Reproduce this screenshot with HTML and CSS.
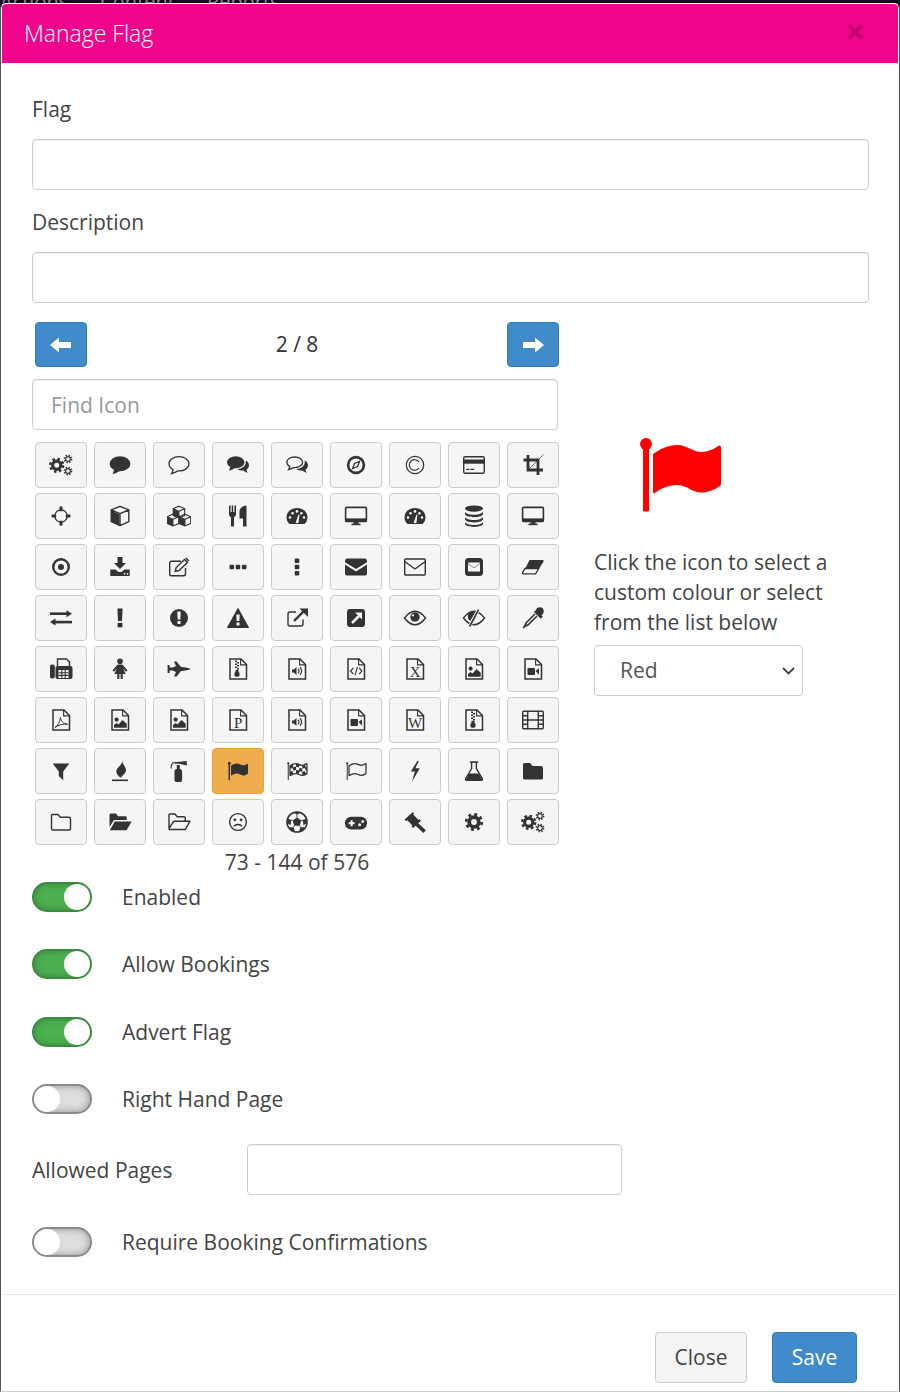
FILE: index.html
```html
<!DOCTYPE html>
<html lang="en">
<head>
<meta charset="utf-8">
<title>Manage Flag</title>
<link rel="stylesheet" href="styles.css">
</head>
<body>
<svg class="sprite" xmlns="http://www.w3.org/2000/svg">
<defs>
<path id="fp" d="M13 16C20 11 28 7 37 7C47 7 52 14 62 14C69 14 75 10 79 7.5Q81 7 81 9L81 46Q81 47.5 79 48.5C74 52 68 54.5 61 54.5C52 54.5 47 47 37 47C28 47 20 51 15 55Q13 56 13 54Z"/>
<clipPath id="fc"><path d="M13 16C20 11 28 7 37 7C47 7 52 14 62 14C69 14 75 10 79 7.5Q81 7 81 9L81 46Q81 47.5 79 48.5C74 52 68 54.5 61 54.5C52 54.5 47 47 37 47C28 47 20 51 15 55Q13 56 13 54Z"/></clipPath>
<g id="gear-s" fill="none" stroke="currentColor"><circle r="2.3" stroke-width="1.2"/><circle r="3.6" stroke-width="1.6" stroke-dasharray="1.4 1.43"/></g>
<g id="gear-b" fill="none" stroke="currentColor"><circle r="4.1" stroke-width="3.2"/><circle r="6.5" stroke-width="2.4" stroke-dasharray="2.55 2.55"/></g>
<path id="bub" d="M12 3.7C6.5 3.7 2 6.8 2 10.8C2 13.2 3.6 15.3 6 16.6C5.8 18 5.3 19.5 4.6 20.5C7 20 9.3 18.8 11 17.9H12C17.5 17.9 22 14.8 22 10.8C22 6.8 17.5 3.7 12 3.7Z"/>
<g id="mc"><path d="M0 3.2L5.6 5.6V12L0 9.6Z" fill="currentColor"/><path d="M5.6 0.2L11.4 2.6V9.6L5.6 12L0 9.6V2.6ZM0 2.8L5.6 5.3L11.4 2.8M5.6 5.3V12" fill="none" stroke="currentColor" stroke-width="1.1"/></g>
<g id="f"><path d="M4 2H15L20.5 7.5V22H4Z" fill="none" stroke="currentColor" stroke-width="1.5"/><path d="M14.6 2V7.9H20.5" fill="none" stroke="currentColor" stroke-width="1.1"/></g>
<g id="dome"><path d="M4.5 20C2.8 18.5 1.5 16 1.5 13.5C1.5 7.7 6.2 4 12 4C17.8 4 22.5 7.7 22.5 13.5C22.5 16 21.2 18.5 19.5 20Z"/><g fill="#f5f5f5"><circle cx="5" cy="13.5" r="1.3"/><circle cx="7.6" cy="9.2" r="1.3"/><circle cx="12" cy="7.4" r="1.3"/><circle cx="16.4" cy="9.2" r="1.3"/><circle cx="19" cy="13.5" r="1.3"/><path d="M10.6 19L13.5 10.5L14.5 10.8L13.4 19Z"/></g></g>
<g id="mon"><rect x="1.6" y="3.4" width="20.8" height="14" rx="1.2" fill="none" stroke="currentColor" stroke-width="1.6"/><rect x="1.6" y="14.4" width="20.8" height="3.6"/><rect x="9.5" y="17.5" width="5" height="2.4"/><rect x="7.5" y="19.6" width="9" height="1.6"/></g>
</defs>
<symbol id="i-cogs" viewBox="0 0 24 24"><use href="#gear-b" x="7.7" y="12.3"/><use href="#gear-s" x="19" y="6"/><use href="#gear-s" x="19" y="18"/></symbol>
<symbol id="i-cog" viewBox="0 0 24 24"><g fill="none" stroke="currentColor"><circle cx="12" cy="12" r="4.8" stroke-width="3.8"/><circle cx="12" cy="12" r="7.7" stroke-width="2.8" stroke-dasharray="3 3.05"/></g></symbol>
<symbol id="i-comment" viewBox="0 0 24 24"><ellipse cx="12" cy="10.8" rx="10.4" ry="7.5"/><path d="M6.5 16L4.6 21.2Q9 20 12.5 17.5Z"/></symbol>
<symbol id="i-comment-o" viewBox="0 0 24 24"><use href="#bub" fill="none" stroke="currentColor" stroke-width="1.3"/></symbol>
<symbol id="i-comments" viewBox="0 0 24 24"><ellipse cx="9.7" cy="9.3" rx="8.7" ry="6"/><path d="M4.5 13.5L3 17.8Q7 16.5 9 15Z"/><path d="M19.8 7.5C22 8.5 23 10.5 23 12.2C23 14 22 15.4 20.5 16.5L21.5 20L17 17.5C14.5 17.7 12.5 17 11 16C16 16 20.5 13 19.8 7.5Z"/></symbol>
<symbol id="i-comments-o" viewBox="0 0 24 24"><path d="M9.7 4C5.3 4 1.8 6.3 1.8 9.3C1.8 11 2.9 12.5 4.7 13.6C4.5 14.8 4.1 15.8 3.6 16.6C5.4 16.2 7 15.4 8.3 14.6H9.7C14.1 14.6 17.6 12.3 17.6 9.3C17.6 6.3 14.1 4 9.7 4Z" fill="none" stroke="currentColor" stroke-width="1.3"/><path d="M19.8 7.5C22 8.5 23 10.5 23 12.2C23 14 22 15.4 20.5 16.5L21.5 20L17 17.5C14.5 17.7 12.5 17 11 16C16 16 20.5 13 19.8 7.5Z"/></symbol>
<symbol id="i-compass" viewBox="0 0 24 24"><circle cx="12" cy="12" r="7.9" fill="none" stroke="currentColor" stroke-width="2.6"/><path d="M15.5 8.5L13.5 13.5L8.5 15.5L10.5 10.5Z" fill="none" stroke="currentColor" stroke-width="1.3"/></symbol>
<symbol id="i-copyright" viewBox="0 0 24 24"><g fill="none" stroke="currentColor" stroke-width="1.2"><circle cx="12" cy="12" r="8.7"/><path d="M16 9A5.3 5.3 0 1 0 16 15"/></g></symbol>
<symbol id="i-card" viewBox="0 0 24 24"><rect x="1.7" y="3.7" width="20.6" height="16.6" rx="1.6" fill="none" stroke="currentColor" stroke-width="1.4"/><rect x="1.7" y="6.5" width="20.6" height="4.2"/><rect x="4.2" y="15.8" width="3.2" height="1.2"/><rect x="8.4" y="15.8" width="3.8" height="1.2"/></symbol>
<symbol id="i-crop" viewBox="0 0 24 24"><g fill="none" stroke="currentColor"><path d="M2.5 7H17V22M7 2V17H22" stroke-width="2.8"/><path d="M7 17L22.5 1.5" stroke-width=".7"/></g></symbol>
<symbol id="i-cross" viewBox="0 0 24 24"><g fill="none" stroke="currentColor"><circle cx="12" cy="12" r="6.2" stroke-width="1.3"/><path d="M12 2.6V7.2M12 16.8V21.4M2.6 12H7.2M16.8 12H21.4" stroke-width="3"/></g></symbol>
<symbol id="i-cube" viewBox="0 0 24 24"><path d="M3.2 6.8L11.4 10.2V21.2L3.2 17.6Z"/><path d="M12 2.3L20.8 5.8V17.6L12 21.7L3.2 17.6V5.8ZM3.2 6L12 9.6L20.8 6M12 9.6V21.7" fill="none" stroke="currentColor" stroke-width="1.4" stroke-linejoin="round"/></symbol>
<symbol id="i-cubes" viewBox="0 0 24 24"><use href="#mc" x="6.3" y="2"/><use href="#mc" x=".3" y="10"/><use href="#mc" x="12.3" y="10"/></symbol>
<symbol id="i-cutlery" viewBox="0 0 24 24"><path d="M3 1.5H4.5V8H5.7V1.5H7.2V8H8.4V1.5H10V10C10 12 8.6 13 8 13.2V22.5H5V13.2C4.4 13 3 12 3 10Z"/><path d="M20.5 1.5V22.5H17V14.5H13.5V7.5C13.5 4 17 1.5 20.5 1.5Z"/></symbol>
<symbol id="i-dash" viewBox="0 0 24 24"><use href="#dome"/></symbol>
<symbol id="i-desktop" viewBox="0 0 24 24"><use href="#mon"/></symbol>
<symbol id="i-db" viewBox="0 0 24 24"><ellipse cx="12" cy="4.6" rx="9" ry="3.2"/><path d="M3 7.2C3 9.2 7 10.7 12 10.7S21 9.2 21 7.2V9.8C21 11.8 17 13.2 12 13.2S3 11.8 3 9.8Z"/><path d="M3 12.4C3 14.4 7 15.9 12 15.9S21 14.4 21 12.4V15C21 17 17 18.4 12 18.4S3 17 3 15Z"/><path d="M3 17.6C3 19.6 7 21.1 12 21.1S21 19.6 21 17.6V19.6C21 21.6 17 23 12 23S3 21.6 3 19.6Z"/></symbol>
<symbol id="i-dot" viewBox="0 0 24 24"><circle cx="12" cy="12" r="7.8" fill="none" stroke="currentColor" stroke-width="2.4"/><circle cx="12" cy="12" r="3"/></symbol>
<symbol id="i-download" viewBox="0 0 24 24"><path d="M9.5 2H14.5V8H18L12 14L6 8H9.5Z"/><path d="M2.3 14.5H7.5L10.5 17H13.5L16.5 14.5H21.7V21H2.3Z"/><circle cx="16.5" cy="18.8" r=".9" fill="#f5f5f5"/><circle cx="19.5" cy="18.8" r=".9" fill="#f5f5f5"/></symbol>
<symbol id="i-edit" viewBox="0 0 24 24"><path d="M18.5 13V19A1.8 1.8 0 0 1 16.7 20.8H4.5A1.8 1.8 0 0 1 2.7 19V8A1.8 1.8 0 0 1 4.5 6.2H14" fill="none" stroke="currentColor" stroke-width="1.4"/><path d="M8.2 16.3L9.2 12.6L17.5 4.6L20.4 7.5L12 15.5Z" fill="none" stroke="currentColor" stroke-width="1.4"/><path d="M18.2 3.4L19.2 2.5L22.5 5.4L21.3 6.6Z"/></symbol>
<symbol id="i-ell-h" viewBox="0 0 24 24"><rect x="3.5" y="9.7" width="4.6" height="4.6" rx="1"/><rect x="9.7" y="9.7" width="4.6" height="4.6" rx="1"/><rect x="15.9" y="9.7" width="4.6" height="4.6" rx="1"/></symbol>
<symbol id="i-ell-v" viewBox="0 0 24 24"><rect x="9.7" y="3.5" width="4.6" height="4.6" rx="1"/><rect x="9.7" y="9.7" width="4.6" height="4.6" rx="1"/><rect x="9.7" y="15.9" width="4.6" height="4.6" rx="1"/></symbol>
<symbol id="i-env" viewBox="0 0 24 24"><path d="M1 6Q1 3.5 3.5 3.5H20.5Q23 3.5 23 6V7.2L12 14L1 7.2Z"/><path d="M1 9.6L12 16.5L23 9.6V18.5Q23 20.5 21 20.5H3Q1 20.5 1 18.5Z"/></symbol>
<symbol id="i-env-o" viewBox="0 0 24 24"><g fill="none" stroke="currentColor" stroke-width="1.4"><rect x="1.7" y="4" width="20.6" height="16" rx="1"/><path d="M1.7 6.5L12 14L22.3 6.5"/></g></symbol>
<symbol id="i-env-s" viewBox="0 0 24 24"><rect x="3" y="3" width="18" height="18" rx="3.5"/><rect x="6" y="7.5" width="12" height="9" fill="#f5f5f5"/><path d="M6 8.5L12 13L18 8.5" fill="none" stroke="#888" stroke-width="1"/></symbol>
<symbol id="i-eraser" viewBox="0 0 24 24"><path d="M8.5 5H21.5Q23.3 5 22.6 6.5L18.5 13H4.5Z"/><path d="M4 13.5H17.7L14.6 18.8H2.4Q1 18.8 1.6 17.6Z" fill="none" stroke="currentColor" stroke-width="1.3"/></symbol>
<symbol id="i-exch" viewBox="0 0 24 24"><rect x="1" y="6.4" width="17" height="2.6"/><path d="M17.5 4.2L23 7.7L17.5 11.2Z"/><rect x="6" y="14.8" width="17" height="2.6"/><path d="M6.5 12.6L1 16.1L6.5 19.6Z"/></symbol>
<symbol id="i-excl" viewBox="0 0 24 24"><path d="M9.4 2.5H14.6L14 15H10Z"/><rect x="9.6" y="16.8" width="4.8" height="4.6"/></symbol>
<symbol id="i-excl-c" viewBox="0 0 24 24"><circle cx="12" cy="12" r="9"/><path d="M10.3 5.5H13.7L13.3 13.5H10.7Z" fill="#f5f5f5"/><rect x="10.5" y="15" width="3" height="3" fill="#f5f5f5"/></symbol>
<symbol id="i-excl-t" viewBox="0 0 24 24"><path d="M12 1.5L23 21.5Q23 22 22 22H2Q1 22 1 21.5Z"/><path d="M10.3 8.5H13.7L13.3 15H10.7Z" fill="#f5f5f5"/><rect x="10.5" y="16.5" width="3" height="3" fill="#f5f5f5"/></symbol>
<symbol id="i-ext" viewBox="0 0 24 24"><path d="M18 13.5V18A2 2 0 0 1 16 20H5A2 2 0 0 1 3 18V8A2 2 0 0 1 5 6H11" fill="none" stroke="currentColor" stroke-width="1.4"/><path d="M9 15L18.5 5.5" fill="none" stroke="currentColor" stroke-width="2.4"/><path d="M14.5 2.5H23V11Z"/></symbol>
<symbol id="i-ext-s" viewBox="0 0 24 24"><rect x="3" y="3" width="18" height="18" rx="3"/><path d="M8 17L15 10" fill="none" stroke="#f5f5f5" stroke-width="2.6"/><path d="M11 6.5H18V13.5Z" fill="#f5f5f5"/></symbol>
<symbol id="i-eye" viewBox="0 0 24 24"><path d="M1.5 12C5 7.3 8.5 5.2 12 5.2S19 7.3 22.5 12C19 16.7 15.5 18.8 12 18.8S5 16.7 1.5 12Z" fill="none" stroke="currentColor" stroke-width="1.4"/><circle cx="12" cy="11" r="4.7"/><circle cx="10" cy="9.4" r="1.1" fill="#f5f5f5"/></symbol>
<symbol id="i-eye-x" viewBox="0 0 24 24"><path d="M1.5 12C5 7.3 8.5 5.2 12 5.2S19 7.3 22.5 12C19 16.7 15.5 18.8 12 18.8S5 16.7 1.5 12Z" fill="none" stroke="currentColor" stroke-width="1.4"/><path d="M13.5 6.3A4.9 4.9 0 0 0 8.3 15Z"/><path d="M8 19.5L16 4.5" stroke="#f5f5f5" stroke-width="3.2"/><path d="M7.6 20.5L16.6 3.6" stroke="currentColor" stroke-width="1.6"/></symbol>
<symbol id="i-drop" viewBox="0 0 24 24"><circle cx="18.8" cy="5.2" r="3.9"/><path d="M14 5L20.8 11.6" stroke="currentColor" stroke-width="3"/><path d="M14 8L5.2 16.8L3.6 20.4L7.2 18.8L16 10" fill="none" stroke="currentColor" stroke-width="1.6"/><path d="M2 22L3.8 20.2" stroke="currentColor" stroke-width="1.6"/></symbol>
<symbol id="i-fax" viewBox="0 0 24 24"><rect x="1" y="7.5" width="4.8" height="14" rx="2"/><path d="M8.5 9V2H17.5L20.5 5V9" fill="none" stroke="currentColor" stroke-width="1.4"/><rect x="6.5" y="9" width="17" height="13" rx="2"/><rect x="9.5" y="13" width="10" height="8" fill="#f5f5f5"/><path d="M12.8 13V21M16.2 13V21M9.5 15.7H19.5M9.5 18.4H19.5" stroke="currentColor" stroke-width="1.1"/></symbol>
<symbol id="i-female" viewBox="0 0 24 24"><circle cx="12" cy="4.2" r="2.8"/><path d="M9.5 7.5H14.5L19.5 13.6L18 14.8L15 11.6L17.8 17H14.7V22H12.6V17H11.4V22H9.3V17H6.2L9 11.6L6 14.8L4.5 13.6Z"/></symbol>
<symbol id="i-jet" viewBox="0 0 24 24"><path d="M.6 8H2.6V10.4H6L8 9.2H9.2L7 4.4H9.6L14 10C18 10.3 22 11 23.6 12C22 13 18 13.7 14 14L9.6 19.6H7L9.2 14.8H8L6 13.6H2.6V16H.6Z"/></symbol>
<symbol id="i-f-zip" viewBox="0 0 24 24"><use href="#f"/><path d="M9 3.5H11V5H9ZM11 5H13V6.5H11ZM9 6.5H11V8H9ZM11 8H13V9.5H11ZM9 9.5H11V11H9ZM11 11H13V12.5H11Z"/><circle cx="11" cy="17.2" r="2.6"/><rect x="9.5" y="12.8" width="3" height="3"/></symbol>
<symbol id="i-f-aud" viewBox="0 0 24 24"><use href="#f"/><path d="M7 12.5H8.8L11.5 10V18L8.8 15.5H7Z"/><path d="M13 11.8A3 3 0 0 1 13 16.2M15 10.2A5.3 5.3 0 0 1 15 17.8" fill="none" stroke="currentColor" stroke-width="1.2"/></symbol>
<symbol id="i-f-code" viewBox="0 0 24 24"><use href="#f"/><path d="M9.3 11L6.5 14L9.3 17M15.2 11L18 14L15.2 17M13.4 10L11 18.4" fill="none" stroke="currentColor" stroke-width="1.1"/></symbol>
<symbol id="i-f-img" viewBox="0 0 24 24"><use href="#f"/><circle cx="8.6" cy="11.6" r="2.1"/><path d="M6 19.8V17L8.5 15L10.5 16.5L14.5 12L18.7 15.8V19.8Z"/></symbol>
<symbol id="i-f-vid" viewBox="0 0 24 24"><use href="#f"/><rect x="6.5" y="11" width="7.5" height="7" rx="1"/><path d="M14.5 14L18 11.2V17.8Z"/></symbol>
<symbol id="i-f-pdf" viewBox="0 0 24 24"><use href="#f"/><path d="M6 19.5C8.5 18.5 11 13 11.5 9.5C11.8 12.5 14 16 18.5 16.2C14.5 15.5 9.5 16.8 6 19.5Z" fill="none" stroke="currentColor" stroke-width="1"/></symbol>
<symbol id="i-film" viewBox="0 0 24 24"><g fill="none" stroke="currentColor" stroke-width="1.4"><rect x="1.7" y="3.2" width="20.6" height="17.6" rx="1"/><path d="M6.7 3.2V20.8M17.3 3.2V20.8M1.7 7.7H6.7M1.7 12H22.3M1.7 16.3H6.7M17.3 7.7H22.3M17.3 16.3H22.3"/></g></symbol>
<symbol id="i-filter" viewBox="0 0 24 24"><path d="M3.7 4.5H20.3L14.2 12.5V21.2L9.8 17V12.5Z"/></symbol>
<symbol id="i-fire" viewBox="0 0 24 24"><path d="M14 1.5C14.5 6 19 8.5 17.8 12.5C17 15 14 16.5 13 18.8C10 17.5 7 14 9 10C10.3 7.5 14.3 6 14 1.5Z"/><rect x="4" y="20.5" width="16" height="1.6"/></symbol>
<symbol id="i-ext-f" viewBox="0 0 24 24"><rect x="7.5" y="10" width="7.6" height="13" rx="2.6"/><rect x="9.8" y="6" width="3" height="5"/><path d="M8 3.2L19.8 2V6.6L12 4.8H8Z"/><path d="M8.5 3.2C4.5 3.2 4 7 4.2 9.5" fill="none" stroke="currentColor" stroke-width="1.1"/></symbol>
<symbol id="i-flag" viewBox="-7 -11 96 96"><circle cx="6" cy="6" r="6"/><rect x="3" y="8" width="6" height="65.5" rx="1"/><use href="#fp"/></symbol>
<symbol id="i-flag-c" viewBox="-7 -11 96 96"><circle cx="6" cy="6" r="4.5"/><rect x="4" y="8" width="4" height="65.5"/><use href="#fp" fill="none" stroke="currentColor" stroke-width="5"/><g clip-path="url(#fc)" fill="none" stroke="currentColor" stroke-width="13" stroke-dasharray="13 13"><path d="M13 22.5C20 17.5 28 13.5 37 13.5C47 13.5 52 20.5 62 20.5C69 20.5 75 16.5 81 13.5"/><path stroke-dashoffset="13" d="M13 35.5C20 30.5 28 26.5 37 26.5C47 26.5 52 33.5 62 33.5C69 33.5 75 29.5 81 26.5"/><path d="M13 48.5C20 43.5 28 39.5 37 39.5C47 39.5 52 46.5 62 46.5C69 46.5 75 42.5 81 39.5"/></g></symbol>
<symbol id="i-flag-o" viewBox="-7 -11 96 96"><circle cx="6" cy="6" r="4.5"/><rect x="4" y="8" width="4" height="65.5"/><use href="#fp" fill="none" stroke="currentColor" stroke-width="5"/></symbol>
<symbol id="i-bolt" viewBox="0 0 24 24"><path d="M14.5 1.8L7.8 12.4H11.8L9 22.8L16.8 9.2H12.4L15.8 2.2Z"/></symbol>
<symbol id="i-flask" viewBox="0 0 24 24"><rect x="7.8" y="2.3" width="8.4" height="1.6"/><path d="M9.6 3.5V9.5L3.7 19.5Q3 21.3 5 21.3H19Q21 21.3 20.3 19.5L14.4 9.5V3.5" fill="none" stroke="currentColor" stroke-width="1.4"/><path d="M7.2 14.5H16.8L20 20Q20.4 21.5 19 21.5H5Q3.6 21.5 4 20Z"/></symbol>
<symbol id="i-fold" viewBox="0 0 24 24"><path d="M3.5 4H9L11.5 7H20Q22 7 22 9V19Q22 20.5 20.5 20.5H3.5Q2 20.5 2 19V5.5Q2 4 3.5 4Z"/></symbol>
<symbol id="i-fold-o" viewBox="0 0 24 24"><path d="M3.5 4.5H9L11.3 7.3H20Q21.5 7.3 21.5 9V18.5Q21.5 20 20 20H4Q2.5 20 2.5 18.5V5.5Q2.5 4.5 3.5 4.5Z" fill="none" stroke="currentColor" stroke-width="1.4"/></symbol>
<symbol id="i-open" viewBox="0 0 24 24"><path d="M1.5 5Q1.5 3.5 3 3.5H8L10 6.2H17.5Q18.7 6.2 18.7 7.5V10H6L1.5 17Z"/><path d="M6.7 11.5H23.7L18.5 20.2H1.8Z"/></symbol>
<symbol id="i-open-o" viewBox="0 0 24 24"><path d="M2 18.5V5Q2 4 3 4H8L10 6.7H17Q18.3 6.7 18.3 8V11M2 18.5L6.8 11.2H23L18.3 19.5H3Q2 19.5 2 18.5Z" fill="none" stroke="currentColor" stroke-width="1.4" stroke-linejoin="round"/></symbol>
<symbol id="i-frown" viewBox="0 0 24 24"><circle cx="12" cy="12" r="8.4" fill="none" stroke="currentColor" stroke-width="1.4"/><circle cx="8.9" cy="9.8" r="1.4"/><circle cx="15.1" cy="9.8" r="1.4"/><path d="M7.8 16.4C9.8 13.8 14.2 13.8 16.2 16.4" fill="none" stroke="currentColor" stroke-width="1.4"/></symbol>
<symbol id="i-ball" viewBox="0 0 24 24"><circle cx="12" cy="12" r="10" fill="#f5f5f5" stroke="currentColor" stroke-width="1.6"/><path d="M12 7.5L16.3 10.6L14.7 15.7H9.3L7.7 10.6Z"/><path d="M8 2.8L12 4.6L16 2.8L14.5 2H9.5ZM2.5 8.5L6.2 10L5.6 15L2.5 13.5ZM21.5 8.5L17.8 10L18.4 15L21.5 13.5ZM4.6 17L8.7 17.6L10 21.8L6.5 20.8ZM19.4 17L15.3 17.6L14 21.8L17.5 20.8Z"/><path d="M12 7.5V4.4M16.3 10.6L18 10M7.7 10.6L6 10M9.3 15.7L8.5 17.5M14.7 15.7L15.5 17.5" stroke="currentColor" stroke-width=".9"/></symbol>
<symbol id="i-pad" viewBox="0 0 24 24"><rect x="1" y="6.8" width="22" height="12.7" rx="6.2"/><path d="M4.6 12.2H6.6V10.2H8.6V12.2H10.6V14.2H8.6V16.2H6.6V14.2H4.6Z" fill="#f5f5f5"/><circle cx="15.6" cy="14.8" r="1.5" fill="#f5f5f5"/><circle cx="18.6" cy="11.4" r="1.5" fill="#f5f5f5"/></symbol>
<symbol id="i-gavel" viewBox="0 0 24 24"><path d="M1.6 9.5L9.6 2.2L11.2 3.6L10.3 4.5L15.6 10L16.6 9.2L18 10.8L10 18L8.6 16.5L9.5 15.5L4.2 10.2L3 11.1Z"/><path d="M12.6 13.2L21.6 21.6" fill="none" stroke="currentColor" stroke-width="3.6"/></symbol>
</svg>

<div class="backdrop"><span>Actions</span><span>Content</span><span>Reports</span></div>

<main class="modal">
  <header class="modal-head">
    <h1 class="modal-title">Manage Flag</h1>
    <span class="modal-x">×</span>
  </header>

  <div class="modal-body">
    <label class="lbl">Flag</label>
    <input class="field" type="text">
    <label class="lbl lbl-next">Description</label>
    <input class="field" type="text">

    <div class="picker">
      <div class="picker-left">
        <div class="pager">
          <button class="btn-blue pager-btn"><svg class="arrow" viewBox="0 0 22 16"><path d="M0 8L9 .5V5H21V11H9V15.5Z"/></svg></button>
          <span class="pager-text">2 / 8</span>
          <button class="btn-blue pager-btn"><svg class="arrow" viewBox="0 0 22 16"><path d="M22 8L13 .5V5H1V11H13V15.5Z"/></svg></button>
        </div>
        <input class="field find" type="text" placeholder="Find Icon">
        <div class="grid">
          <button class="ib"><svg class="ic"><use href="#i-cogs"/></svg></button>
          <button class="ib"><svg class="ic"><use href="#i-comment"/></svg></button>
          <button class="ib"><svg class="ic"><use href="#i-comment-o"/></svg></button>
          <button class="ib"><svg class="ic"><use href="#i-comments"/></svg></button>
          <button class="ib"><svg class="ic"><use href="#i-comments-o"/></svg></button>
          <button class="ib"><svg class="ic"><use href="#i-compass"/></svg></button>
          <button class="ib"><svg class="ic"><use href="#i-copyright"/></svg></button>
          <button class="ib"><svg class="ic"><use href="#i-card"/></svg></button>
          <button class="ib"><svg class="ic"><use href="#i-crop"/></svg></button>

          <button class="ib"><svg class="ic"><use href="#i-cross"/></svg></button>
          <button class="ib"><svg class="ic"><use href="#i-cube"/></svg></button>
          <button class="ib"><svg class="ic"><use href="#i-cubes"/></svg></button>
          <button class="ib"><svg class="ic"><use href="#i-cutlery"/></svg></button>
          <button class="ib"><svg class="ic"><use href="#i-dash"/></svg></button>
          <button class="ib"><svg class="ic"><use href="#i-desktop"/></svg></button>
          <button class="ib"><svg class="ic"><use href="#i-dash"/></svg></button>
          <button class="ib"><svg class="ic"><use href="#i-db"/></svg></button>
          <button class="ib"><svg class="ic"><use href="#i-desktop"/></svg></button>

          <button class="ib"><svg class="ic"><use href="#i-dot"/></svg></button>
          <button class="ib"><svg class="ic"><use href="#i-download"/></svg></button>
          <button class="ib"><svg class="ic"><use href="#i-edit"/></svg></button>
          <button class="ib"><svg class="ic"><use href="#i-ell-h"/></svg></button>
          <button class="ib"><svg class="ic"><use href="#i-ell-v"/></svg></button>
          <button class="ib"><svg class="ic"><use href="#i-env"/></svg></button>
          <button class="ib"><svg class="ic"><use href="#i-env-o"/></svg></button>
          <button class="ib"><svg class="ic"><use href="#i-env-s"/></svg></button>
          <button class="ib"><svg class="ic"><use href="#i-eraser"/></svg></button>

          <button class="ib"><svg class="ic"><use href="#i-exch"/></svg></button>
          <button class="ib"><svg class="ic"><use href="#i-excl"/></svg></button>
          <button class="ib"><svg class="ic"><use href="#i-excl-c"/></svg></button>
          <button class="ib"><svg class="ic"><use href="#i-excl-t"/></svg></button>
          <button class="ib"><svg class="ic"><use href="#i-ext"/></svg></button>
          <button class="ib"><svg class="ic"><use href="#i-ext-s"/></svg></button>
          <button class="ib"><svg class="ic"><use href="#i-eye"/></svg></button>
          <button class="ib"><svg class="ic"><use href="#i-eye-x"/></svg></button>
          <button class="ib"><svg class="ic"><use href="#i-drop"/></svg></button>

          <button class="ib"><svg class="ic"><use href="#i-fax"/></svg></button>
          <button class="ib"><svg class="ic"><use href="#i-female"/></svg></button>
          <button class="ib"><svg class="ic"><use href="#i-jet"/></svg></button>
          <button class="ib"><svg class="ic"><use href="#i-f-zip"/></svg></button>
          <button class="ib"><svg class="ic"><use href="#i-f-aud"/></svg></button>
          <button class="ib"><svg class="ic"><use href="#i-f-code"/></svg></button>
          <button class="ib"><svg class="ic" viewBox="0 0 24 24"><use href="#f"/><text x="12.2" y="20" class="ftxt">X</text></svg></button>
          <button class="ib"><svg class="ic"><use href="#i-f-img"/></svg></button>
          <button class="ib"><svg class="ic"><use href="#i-f-vid"/></svg></button>

          <button class="ib"><svg class="ic"><use href="#i-f-pdf"/></svg></button>
          <button class="ib"><svg class="ic"><use href="#i-f-img"/></svg></button>
          <button class="ib"><svg class="ic"><use href="#i-f-img"/></svg></button>
          <button class="ib"><svg class="ic" viewBox="0 0 24 24"><use href="#f"/><text x="12.2" y="20" class="ftxt">P</text></svg></button>
          <button class="ib"><svg class="ic"><use href="#i-f-aud"/></svg></button>
          <button class="ib"><svg class="ic"><use href="#i-f-vid"/></svg></button>
          <button class="ib"><svg class="ic" viewBox="0 0 24 24"><use href="#f"/><text x="12.2" y="20" class="ftxt">W</text></svg></button>
          <button class="ib"><svg class="ic"><use href="#i-f-zip"/></svg></button>
          <button class="ib"><svg class="ic"><use href="#i-film"/></svg></button>

          <button class="ib"><svg class="ic"><use href="#i-filter"/></svg></button>
          <button class="ib"><svg class="ic"><use href="#i-fire"/></svg></button>
          <button class="ib"><svg class="ic"><use href="#i-ext-f"/></svg></button>
          <button class="ib ib-on"><svg class="ic"><use href="#i-flag"/></svg></button>
          <button class="ib"><svg class="ic"><use href="#i-flag-c"/></svg></button>
          <button class="ib"><svg class="ic"><use href="#i-flag-o"/></svg></button>
          <button class="ib"><svg class="ic"><use href="#i-bolt"/></svg></button>
          <button class="ib"><svg class="ic"><use href="#i-flask"/></svg></button>
          <button class="ib"><svg class="ic"><use href="#i-fold"/></svg></button>

          <button class="ib"><svg class="ic"><use href="#i-fold-o"/></svg></button>
          <button class="ib"><svg class="ic"><use href="#i-open"/></svg></button>
          <button class="ib"><svg class="ic"><use href="#i-open-o"/></svg></button>
          <button class="ib"><svg class="ic"><use href="#i-frown"/></svg></button>
          <button class="ib"><svg class="ic"><use href="#i-ball"/></svg></button>
          <button class="ib"><svg class="ic"><use href="#i-pad"/></svg></button>
          <button class="ib"><svg class="ic"><use href="#i-gavel"/></svg></button>
          <button class="ib"><svg class="ic"><use href="#i-cog"/></svg></button>
          <button class="ib"><svg class="ic"><use href="#i-cogs"/></svg></button>
        </div>
        <div class="count">73 - 144 of 576</div>
      </div>

      <aside class="picker-right">
        <svg class="big-flag"><use href="#i-flag"/></svg>
        <p class="hint">Click the icon to select a custom colour or select from the list below</p>
        <select class="colour"><option>Red</option></select>
      </aside>
    </div>

    <div class="toggle-row"><span class="toggle on"></span><span class="toggle-text">Enabled</span></div>
    <div class="toggle-row"><span class="toggle on"></span><span class="toggle-text">Allow Bookings</span></div>
    <div class="toggle-row"><span class="toggle on"></span><span class="toggle-text">Advert Flag</span></div>
    <div class="toggle-row"><span class="toggle"></span><span class="toggle-text">Right Hand Page</span></div>
    <div class="pages-row"><label class="pages-lbl">Allowed Pages</label><input class="field pages" type="text"></div>
    <div class="toggle-row last"><span class="toggle"></span><span class="toggle-text">Require Booking Confirmations</span></div>
  </div>

  <footer class="modal-foot">
    <button class="btn-close">Close</button>
    <button class="btn-blue btn-save">Save</button>
  </footer>
</main>
</body>
</html>
```

FILE: styles.css
```css
* { box-sizing: border-box; }
html, body { margin: 0; padding: 0; }
body {
  width: 900px;
  height: 1392px;
  overflow: hidden;
  background: #100c1c;
  font-family: "Open Sans", sans-serif;
  font-size: 21px;
  line-height: 30px;
  color: #333;
}
.sprite { display: block; width: 0; height: 0; }
.ftxt {
  font-family: "Liberation Serif", serif;
  font-size: 15px;
  text-anchor: middle;
}
.backdrop {
  height: 3px;
  overflow: hidden;
  display: flex;
  gap: 32px;
  color: #8a8794;
  font-size: 20px;
}
.backdrop span { flex: none; display: block; height: 3px; line-height: 3px; }

.modal {
  width: 900px;
  height: 1389px;
  background: #fff;
  border: 1px solid #555;
  border-top-color: #fff;
  border-bottom-color: #ccc;
  border-radius: 6px 6px 0 0;
  padding: 0 1px;
  display: flex;
  flex-direction: column;
  overflow: hidden;
}
.modal-head {
  height: 59px;
  flex: none;
  background: #f0048b;
  border-radius: 4px 4px 0 0;
  display: flex;
  align-items: center;
  justify-content: space-between;
  padding: 0 33px 0 22px;
  color: #fff;
}
.modal-title { margin: -2px 0 0; font-size: 23px; font-weight: 300; line-height: 34px; }
.modal-x {
  font-size: 34px;
  font-weight: 700;
  color: #000;
  opacity: .2;
  line-height: 30px;
  margin-top: -5px;
}
.modal-body { flex: 1; padding: 31px 30px 0 30px; }
.lbl { display: block; margin-bottom: 15px; color: #444; }
.lbl-next { margin-top: 17px; }
.field {
  display: block;
  width: 837px;
  height: 51px;
  border: 1px solid #ccc;
  border-radius: 4px;
  padding: 0 18px;
  font: inherit;
  color: #555;
  background: #fff;
  box-shadow: inset 0 1px 1px rgba(0,0,0,.075);
  outline: 0;
}
.field::placeholder { color: #999; opacity: 1; }

.picker { display: flex; margin-top: 19px; }
.picker-left { width: 527px; flex: none; }
.pager {
  height: 45px;
  margin-bottom: 12px;
  padding-left: 3px;
  display: flex;
  align-items: center;
  justify-content: space-between;
}
.btn-blue {
  background: #428bca;
  border: 1px solid #357ebd;
  border-radius: 4px;
  color: #fff;
  font: inherit;
  padding: 0;
}
.pager-btn { width: 52px; height: 45px; display: flex; align-items: center; justify-content: center; }
.arrow { width: 22px; height: 16px; fill: #fff; }
.pager-text { color: #333; padding-bottom: 2px; }
.find { width: 526px; margin-bottom: 12px; }
.grid {
  display: grid;
  grid-template-columns: repeat(9, 52px);
  grid-auto-rows: 46px;
  gap: 5px 7px;
  padding-left: 3px;
}
.ib {
  padding: 0;
  background: #f5f5f5;
  border: 1px solid #ccc;
  border-radius: 4px;
  display: flex;
  align-items: center;
  justify-content: center;
}
.ib-on { background: #f0ad4e; border-color: #eea236; }
.ic { width: 24px; height: 24px; color: #333; fill: currentColor; }
.count { text-align: center; margin-top: 2px; padding-left: 3px; color: #444; }

.picker-right { margin-left: 35px; width: 240px; padding-top: 105px; }
.big-flag { display: block; width: 96px; height: 96px; margin-left: 39px; fill: #f00; color: #f00; }
.hint { margin: 24px 0 8px; color: #444; }
.colour {
  display: block;
  width: 209px;
  height: 51px;
  border: 1px solid #ccc;
  border-radius: 4px;
  padding: 0 25px 2px;
  font: inherit;
  color: #555;
  appearance: none;
  background: #fff url("data:image/svg+xml,%3Csvg xmlns='http://www.w3.org/2000/svg' width='13' height='8'%3E%3Cpath d='M1 1L6.5 6.5L12 1' fill='none' stroke='%23444' stroke-width='1.8'/%3E%3C/svg%3E") no-repeat right 7px center;
}

.toggle-row {
  display: flex;
  align-items: center;
  gap: 30px;
  height: 30px;
  margin-top: 37.4px;
}
.picker + .toggle-row { margin-top: 5px; }
.toggle {
  position: relative;
  flex: none;
  width: 60px;
  height: 30px;
  border-radius: 15px;
  border: 2px solid #8a8a8a;
  background: #ddd;
  box-shadow: inset 0 0 7px rgba(0,0,0,.35);
}
.toggle::after {
  content: "";
  position: absolute;
  top: 0;
  left: 0;
  width: 26px;
  height: 26px;
  border-radius: 50%;
  background: #fff;
}
.toggle.on { background: #4caf50; border-color: #3b8a3f; box-shadow: inset 0 0 7px rgba(0,0,0,.25); }
.toggle.on::after { left: auto; right: 0; }
.toggle-text { color: #444; }
.pages-row { display: flex; align-items: center; margin-top: 30px; }
.pages-lbl { width: 215px; flex: none; color: #444; }
.pages { width: 375px; }
.toggle-row.last { margin-top: 32px; }

.modal-foot {
  flex: none;
  height: 97px;
  border-top: 1px solid #e5e5e5;
  padding: 37px 41px 0 0;
  display: flex;
  justify-content: flex-end;
  align-items: flex-start;
  gap: 25px;
}
.btn-close {
  width: 92px;
  height: 51px;
  background: #f4f4f4;
  border: 1px solid #ccc;
  border-radius: 4px;
  font: inherit;
  color: #444;
  padding: 0 0 2px;
}
.btn-save { width: 85px; height: 51px; padding-bottom: 2px; }
```
